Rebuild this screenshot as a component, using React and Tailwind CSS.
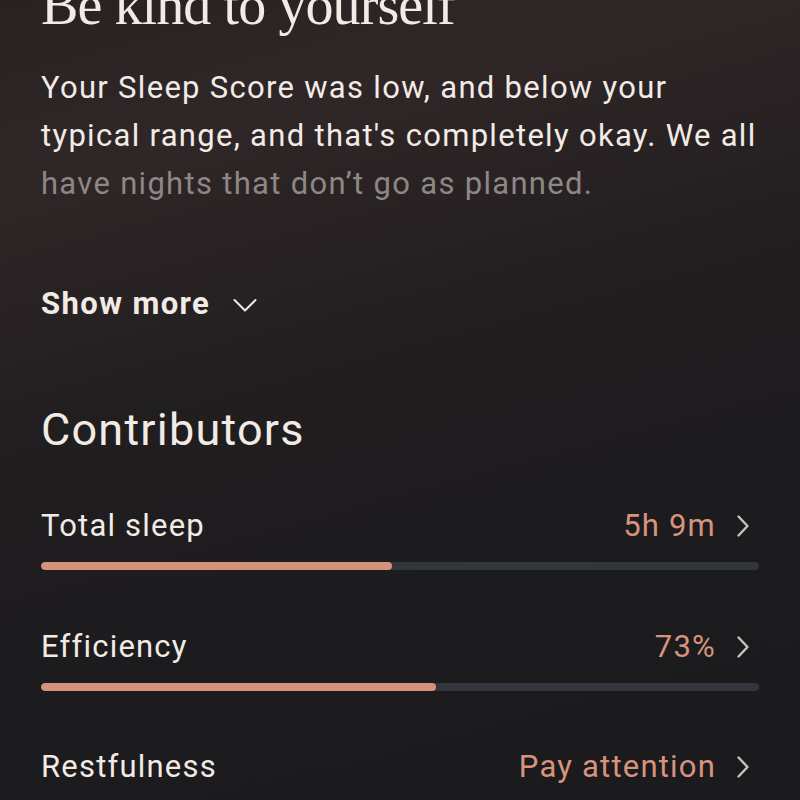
const rows = [
  { label: 'Total sleep', value: '5h 9m', fill: 48.9 },
  { label: 'Efficiency', value: '73%', fill: 55 },
  { label: 'Restfulness', value: 'Pay attention', fill: 40 },
]

function ChevronRight() {
  return (
    <svg className="w-[14px] h-[24px] text-[#c9c3bf]" viewBox="0 0 14 24" fill="none" stroke="currentColor">
      <path d="M2.5 2.5l9 9.5-9 9.5" strokeWidth={2.4} strokeLinecap="round" strokeLinejoin="round" />
    </svg>
  )
}

export default function App() {
  return (
    <div className="w-[800px] h-[800px] overflow-hidden bg-[linear-gradient(165deg,#282223_0%,#2f2627_18%,#211e20_45%,#1c1b1d_70%,#1b1a1c_100%)] px-[41px] text-[#f2ebe5] font-['Roboto',sans-serif]">
      {/* Heading, scrolled partly out of view */}
      <h1 className="-mt-[23px] font-['Liberation_Serif',serif] text-[56px] leading-[56px] tracking-[-0.9px]">
        Be kind to yourself
      </h1>

      <p className="mt-[31px] text-[31px] leading-[48px] tracking-[1.3px]">
        <span className="block">Your Sleep Score was low, and below your</span>
        <span className="block">typical range, and that's completely okay. We all</span>
        <span className="block text-[#8d8785]">have nights that don’t go as planned.</span>
      </p>

      <button className="mt-[78px] flex items-center gap-[23px] text-[31px] leading-[36px] font-bold tracking-[1.4px]">
        Show more
        <svg className="w-[24px] h-[14px] mt-[2px]" viewBox="0 0 24 14" fill="none" stroke="currentColor">
          <path d="M1.5 2l10.5 10.5L22.5 2" strokeWidth={2} strokeLinecap="round" strokeLinejoin="round" />
        </svg>
      </button>

      <h2 className="mt-[82px] text-[45px] leading-[52px] tracking-[1.2px]">Contributors</h2>

      {/* Contributor rows */}
      <div className="mt-[52px] flex flex-col gap-[58.5px]">
        {rows.map((row) => (
          <div key={row.label}>
            <div className="flex items-center justify-between text-[31px] leading-[36px] tracking-[1.2px]">
              <span>{row.label}</span>
              <span className="flex items-center gap-[20px] text-[#d8937d] mr-[9px]">
                {row.value}
                <ChevronRight />
              </span>
            </div>
            <div className="mt-[18px] h-[8px] rounded-full bg-[#32353b] overflow-hidden">
              <div className="h-full rounded-full bg-[#d4917c]" style={{ width: `${row.fill}%` }} />
            </div>
          </div>
        ))}
      </div>
    </div>
  )
}
